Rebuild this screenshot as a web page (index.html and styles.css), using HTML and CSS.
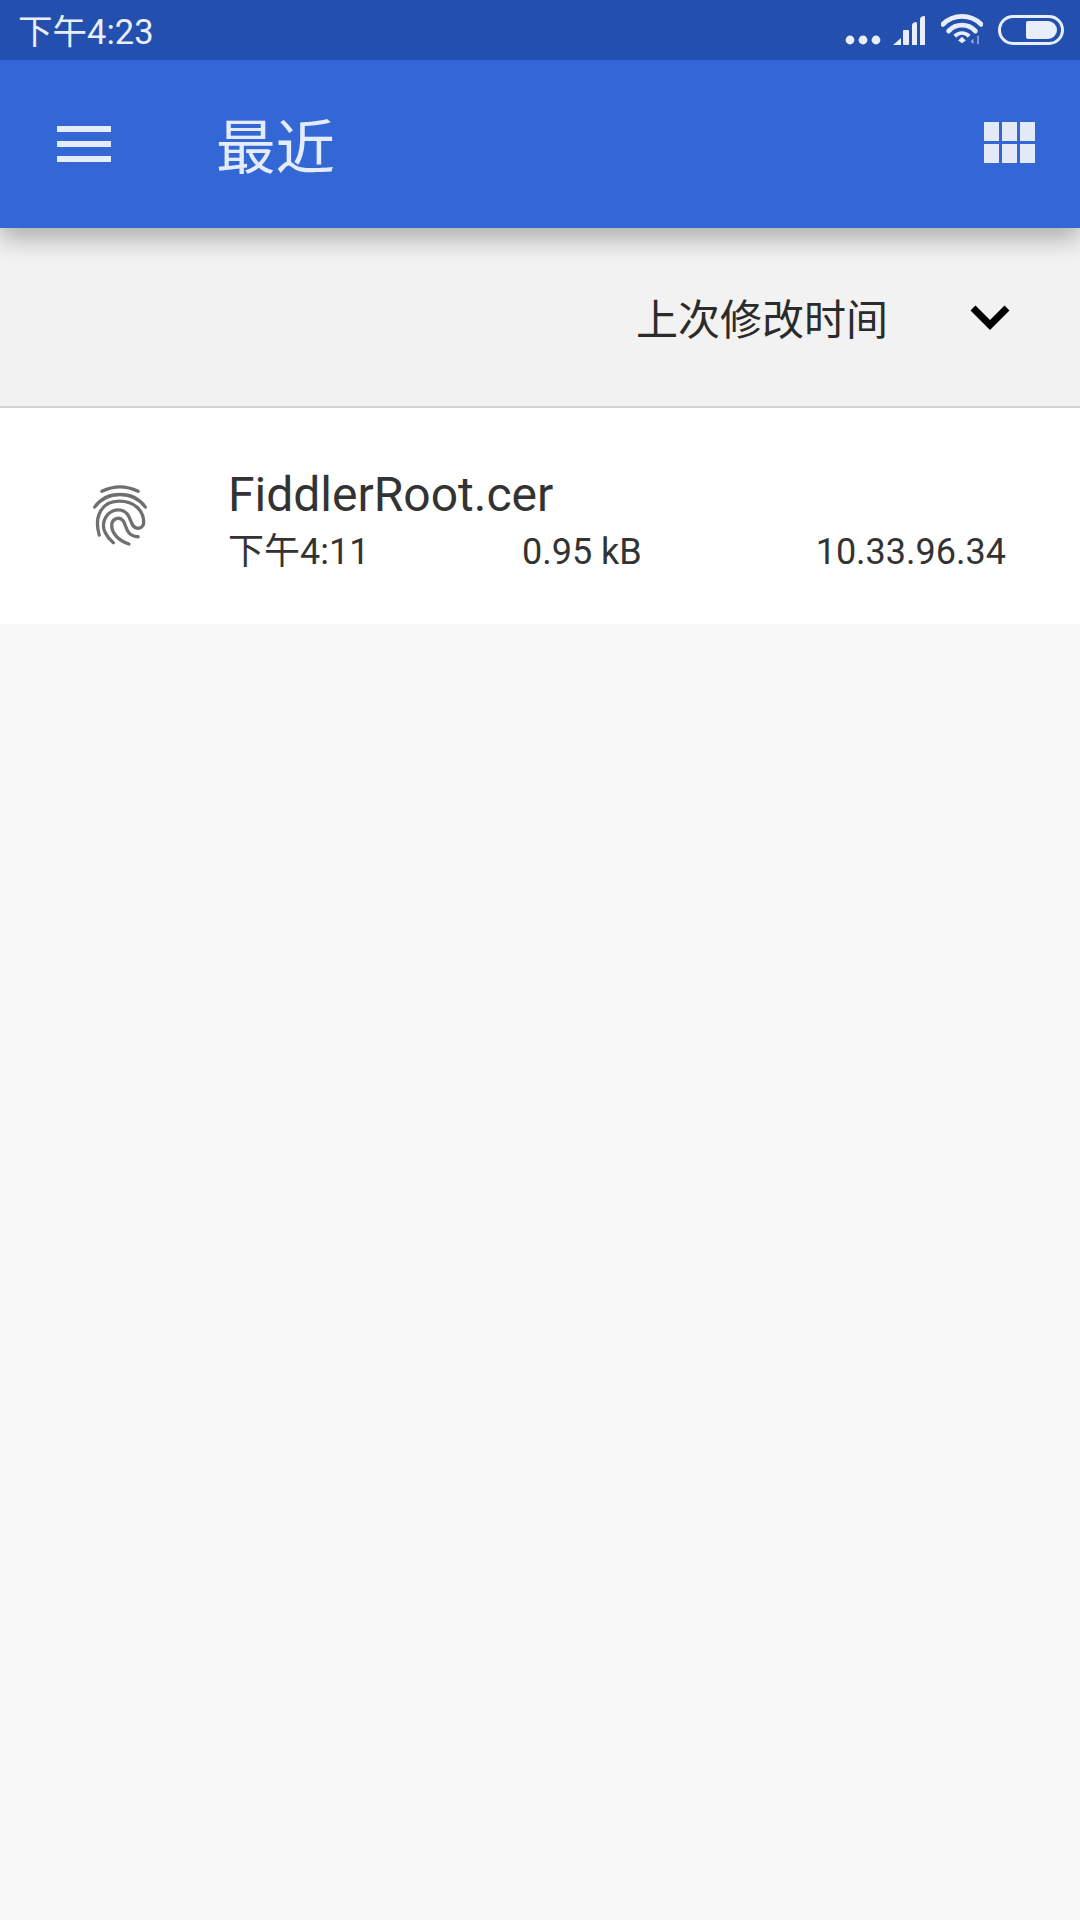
FILE: index.html
```html
<!DOCTYPE html>
<html lang="zh-CN">
<head>
    <meta charset="UTF-8">
    <title>最近</title>
    <link rel="stylesheet" href="styles.css">
</head>
<body>
    <div class="app">
        <header class="header">
            <div class="status-bar">
                <span class="clock">下午4:23</span>
                <div class="status-icons">
                    <svg class="ic-dots" viewBox="0 0 36 10"><circle cx="5" cy="5" r="4.4"/><circle cx="18" cy="5" r="4.4"/><circle cx="31" cy="5" r="4.4"/></svg>
                    <svg class="ic-signal" viewBox="0 0 32 30"><path d="M0 29 8 22V29Z"/><rect x="10" y="14" width="6" height="15" rx="1"/><path d="M19 29V9q0-2 3-3 2 0 2 1V29Z"/><path d="M27 29V3q0-2 3-3 2-.5 2 1V29Z"/></svg>
                    <svg class="ic-wifi" viewBox="0 0 44 34">
                        <path class="wifi-arc" d="M2 11C13 0 31 0 42 11"/>
                        <path class="wifi-arc" d="M8 18C16 10 28 10 36 18"/>
                        <path d="M13 22C18 17 26 17 31 22L28 25C24 21 20 21 16 25Z"/>
                        <path d="M18 28 22 24 26 28 22 31Z"/>
                        <path class="wifi-mark" d="M34 26 31 29 34 32Z"/>
                        <rect class="wifi-mark" x="38" y="23" width="1.6" height="9"/>
                    </svg>
                    <div class="battery"><div class="battery-level"></div></div>
                </div>
            </div>
            <div class="toolbar">
                <div class="menu-icon"><span></span><span></span><span></span></div>
                <h1 class="title">最近</h1>
                <div class="grid-icon">
                    <span></span><span></span><span></span>
                    <span></span><span></span><span></span>
                </div>
            </div>
        </header>

        <div class="sort-bar">
            <span class="sort-label">上次修改时间</span>
            <svg class="chevron" viewBox="0 0 40 26"><path d="M3 4 20 21 37 4"/></svg>
        </div>

        <div class="file-row">
            <div class="file-icon">
                <svg class="fingerprint" viewBox="95 70 170 200">
                    <path d="M125 95C160 78 200 78 235 95"/>
                    <path d="M103 143C140 92 220 92 257 143"/>
                    <path d="M117 228C100 170 125 125 178 125C225 125 252 155 252 190C252 202 242 208 232 207C215 205 215 185 205 168C195 152 175 147 158 155C135 165 122 195 135 220C142 235 150 243 160 251"/>
                    <path d="M207 255C175 245 153 222 155 195C157 178 178 170 190 185C200 200 198 232 235 233"/>
                </svg>
            </div>
            <div class="file-info">
                <div class="file-name">FiddlerRoot.cer</div>
                <div class="file-meta">
                    <span>下午4:11</span>
                    <span>0.95 kB</span>
                    <span class="file-source">10.33.96.34</span>
                </div>
            </div>
        </div>
    </div>
</body>
</html>
```

FILE: styles.css
```css
* {
    box-sizing: border-box;
}

body {
    margin: 0;
    background: #f8f8f8;
    font-family: Roboto, "Noto Sans CJK SC", sans-serif;
}

.app {
    width: 1080px;
    height: 1920px;
    overflow: hidden;
}

/* Blue header */
.header {
    position: relative;
    z-index: 2;
    box-shadow: 0 10px 24px rgba(0, 0, 0, 0.3);
}

.status-bar {
    height: 60px;
    background: #234fae;
    color: #e8eefb;
    display: flex;
    align-items: center;
    justify-content: space-between;
    padding: 0 16px 0 18px;
}

.clock {
    font-size: 34.5px;
    margin-top: -2px;
}

.status-icons {
    display: flex;
    align-items: center;
    gap: 17px;
}

.status-icons svg {
    fill: #e8eefb;
}

.ic-dots {
    width: 36px;
    height: 10px;
    margin-top: 19px;
    margin-right: -5px;
}

.ic-signal {
    width: 32px;
    height: 30px;
    margin-top: 2px;
    margin-right: -1px;
}

.ic-wifi {
    width: 42px;
    height: 34px;
    margin-right: -2px;
}

.wifi-arc {
    fill: none !important;
    stroke: #e8eefb;
    stroke-width: 5;
    stroke-linecap: round;
}

.wifi-mark {
    opacity: 0.6;
}

.battery {
    width: 66px;
    height: 30px;
    border: 3px solid #e8eefb;
    border-radius: 15px;
    padding: 3px 4px 3px 25px;
}

.battery-level {
    height: 100%;
    background: #e8eefb;
    border-radius: 2px 9px 9px 2px;
}

.toolbar {
    height: 168px;
    background: #3367d6;
    display: flex;
    align-items: center;
    padding: 0 45px 0 57px;
}

.menu-icon {
    width: 54px;
    display: flex;
    flex-direction: column;
    gap: 9px;
}

.menu-icon span {
    height: 6px;
    background: #e4ebfa;
}

.title {
    flex: 1;
    margin: 0 0 2px 105px;
    font-size: 59.5px;
    font-weight: 400;
    color: #e4ebfa;
}

.grid-icon {
    width: 51px;
    margin-bottom: 4px;
    display: grid;
    grid-template-columns: repeat(3, 15px);
    grid-auto-rows: 19px;
    gap: 3px;
}

.grid-icon span {
    background: #e4e9f7;
}

/* Sort bar */
.sort-bar {
    height: 180px;
    background: #f2f2f2;
    border-bottom: 2px solid #d2d2d2;
    display: flex;
    align-items: center;
    justify-content: flex-end;
    padding: 0 70px 0 0;
}

.sort-label {
    font-size: 42px;
    color: #2b2b2b;
    margin-bottom: 2px;
}

.chevron {
    width: 40px;
    height: 26px;
    margin-left: 82px;
    fill: none;
    stroke: #000;
    stroke-width: 7;
}

/* File list */
.file-row {
    height: 216px;
    background: #fff;
    display: flex;
    align-items: center;
}

.file-icon {
    width: 228px;
    padding-left: 92px;
    display: flex;
}

.fingerprint {
    width: 56px;
    height: 66px;
    fill: none;
    stroke: #6f6f6f;
    stroke-width: 10;
    stroke-linecap: round;
}

.file-info {
    flex: 1;
    padding: 9px 74px 0 0;
    color: #333;
}

.file-name {
    font-size: 48px;
    line-height: 56px;
}

.file-meta {
    display: grid;
    grid-template-columns: 294px auto 1fr;
    font-size: 36px;
    line-height: 46px;
    margin-top: 6px;
}

.file-source {
    text-align: right;
}
```
